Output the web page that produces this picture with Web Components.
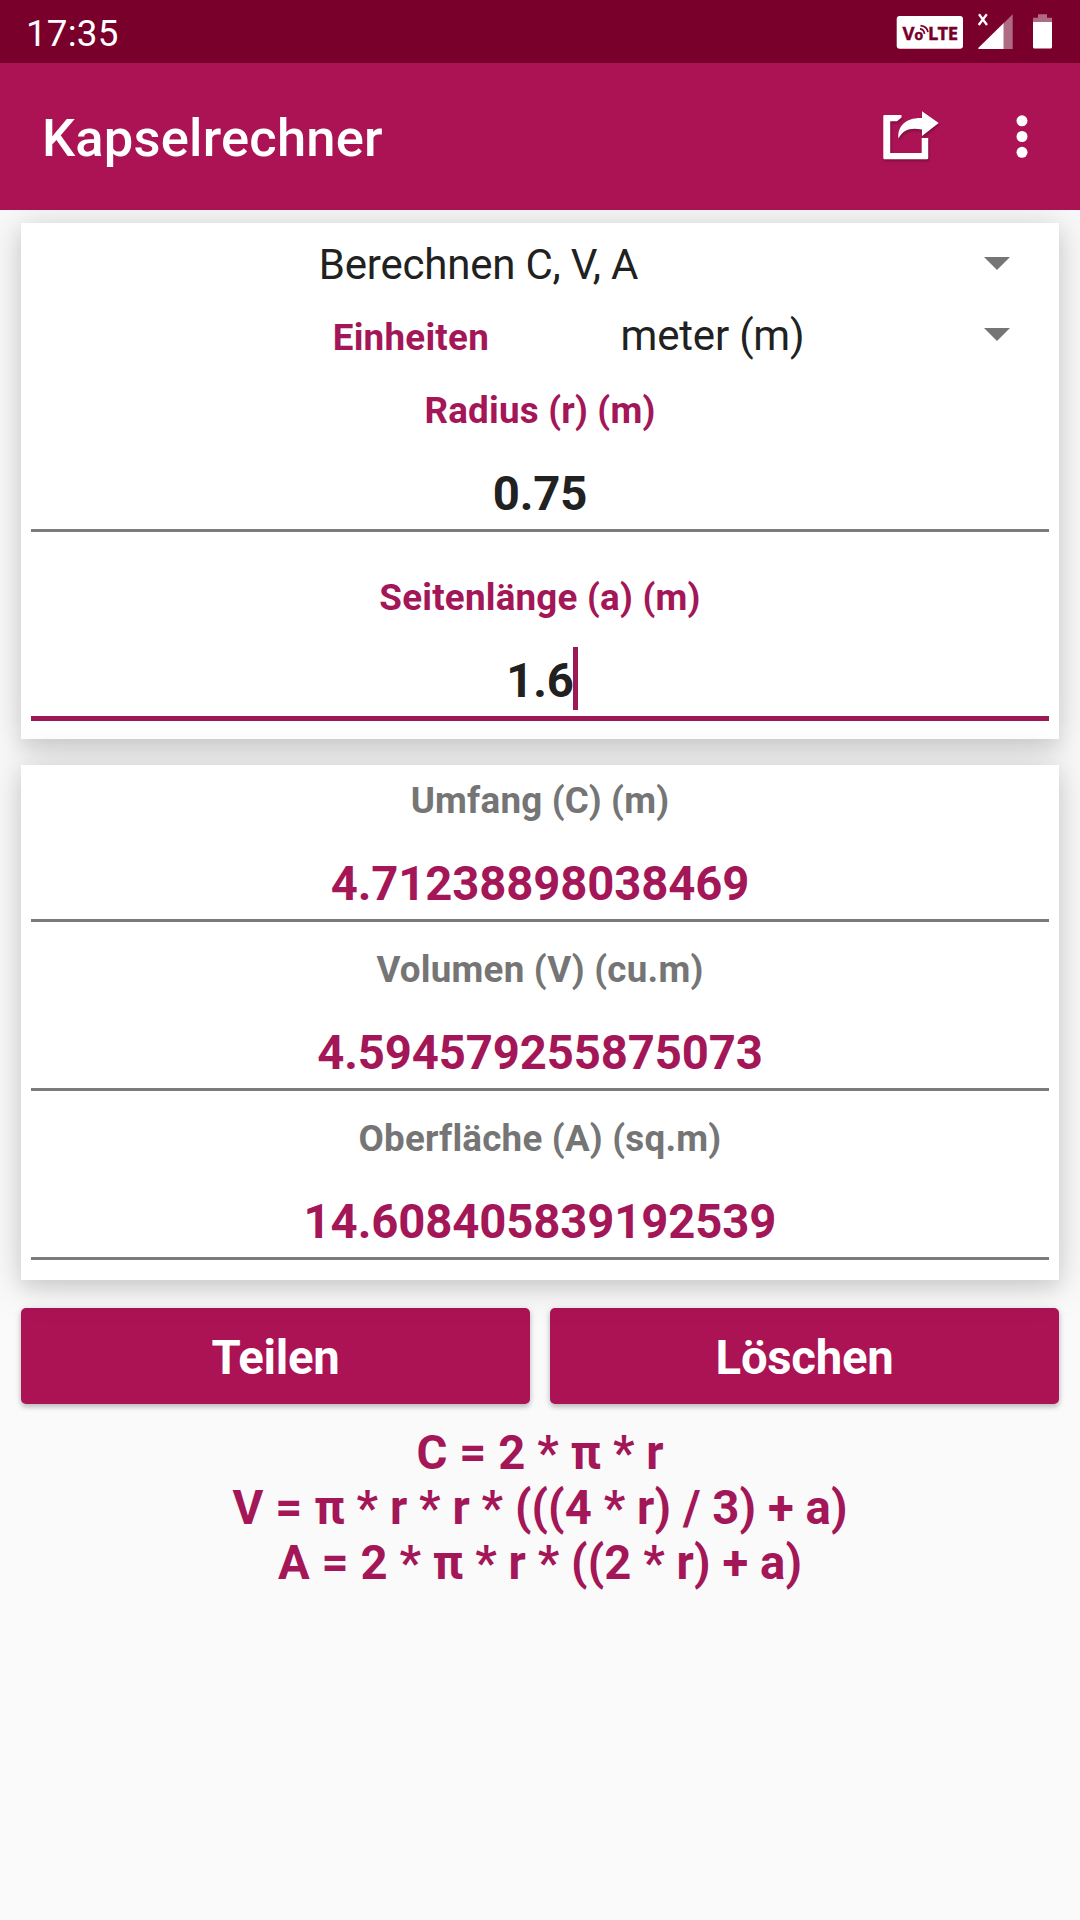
<!DOCTYPE html>
<html lang="de">
<head>
<meta charset="utf-8">
<title>Kapselrechner</title>
<style>
body { margin: 0; background: #fafafa; font-family: Roboto, "Noto Sans", sans-serif; color: #212121; }
</style>
</head>
<body>
<capsule-app></capsule-app>
<script>
function define(name, html) {
  const template = document.createElement('template');
  template.innerHTML = html;
  customElements.define(name, class extends HTMLElement {
    constructor() {
      super();
      this.attachShadow({ mode: 'open' }).appendChild(template.content.cloneNode(true));
    }
  });
}

define('status-bar', `
<style>
:host { display: flex; justify-content: space-between; height: 63px; background: #78002b; color: #fff; box-sizing: border-box; padding: 0 28px 0 26px; }
time { font-size: 36.75px; line-height: 67px; letter-spacing: .2px; }
.icons { display: flex; align-items: flex-start; padding-top: 12px; }
svg { display: block; }
.volte { margin-right: 14px; }
.signal { margin-right: 19px; }
</style>
<time>17:35</time>
<div class="icons">
  <svg class="volte" width="67" height="40" viewBox="896 12 67 40">
    <rect x="896.7" y="16" width="66.3" height="32.7" rx="3" fill="#fff"/>
    <text y="39.5" font-family="Noto Sans" font-weight="700" font-size="18.500" fill="#78002b" stroke="#78002b" stroke-width=".4"><tspan x="902.6">V</tspan><tspan x="914.3" font-size="14.500">o</tspan><tspan x="928" textLength="30">LTE</tspan></text>
    <path d="M920 28.8q4 .5 4.5 5M920.5 25.6q6.500 .5 7.500 6.500" fill="none" stroke="#78002b" stroke-width="1.7"/>
  </svg>
  <svg class="signal" width="36" height="40" viewBox="977 12 36 40">
    <path d="M979 14.200L987 25M986.800 14.200L978.700 25" stroke="#fff" stroke-width="2.300" fill="none"/>
    <path d="M1003.700 23.300L1012.700 14.300V49H1003.700z" fill="#fff" opacity=".42"/>
    <path d="M1003.700 23V49H979Q977.500 49 978.500 47.800z" fill="#fff"/>
  </svg>
  <svg width="20" height="40" viewBox="1032 12 20 40">
    <path d="M1038 14.300h9v3.400h5V22h-19v-4.300h5z" fill="#fff" opacity=".42"/>
    <path d="M1033 22h19v25q0 1.500-1.500 1.500h-16q-1.500 0-1.500-1.500z" fill="#fff"/>
  </svg>
</div>`);

define('app-bar', `
<style>
:host { display: flex; align-items: center; height: 147px; background: #ab1355; color: #fff; box-sizing: border-box; padding: 0 51px 0 42px; }
h1 { margin: 0; flex: 1; font-size: 52.5px; font-weight: 500; line-height: 147px; padding-top: 4px; box-sizing: border-box; letter-spacing: .2px; }
svg { display: block; }
.share { margin-right: 73px; filter: drop-shadow(1px 2px 1px rgba(0,0,0,.25)); }
</style>
<h1><slot></slot></h1>
<svg class="share" width="60" height="54" viewBox="882 110 60 54">
  <path d="M901.500 115H884.500Q883.300 115 883.300 116.200V158Q883.300 159.200 884.500 159.200H927Q928.200 159.200 928.200 158V138H921.700V153H890.200V121.300H897L901.500 117.500z" fill="#fff"/>
  <path d="M922 111.300L938.700 123L922 136V129.500C910 127.500 903.500 129.500 898.500 138.500C897 126 906 117.500 922 118z" fill="#fff"/>
</svg>
<svg width="14" height="54" viewBox="1015.300 110 14 54">
  <g fill="#fff"><circle cx="1022.300" cy="120.800" r="5.500"/><circle cx="1022.300" cy="136.500" r="5.500"/><circle cx="1022.300" cy="152.300" r="5.500"/></g>
</svg>`);

define('panel-card', `
<style>
:host { display: flex; flex-direction: column; background: #fff; box-sizing: border-box; position: relative; z-index: 1;
  box-shadow: 0 8px 18px rgba(0,0,0,.11), 0 2px 40px 4px rgba(0,0,0,.12); }
</style>
<slot></slot>`);

define('drop-down', `
<style>
:host { display: flex; align-items: center; height: 71px; font-size: 42px; line-height: 71px; letter-spacing: -.2px; box-sizing: border-box; padding-right: 49px; }
.value { flex: 1; text-align: center; padding-right: 48px; white-space: nowrap; }
svg { display: block; margin-top: -2px; }
</style>
<span class="value"><slot></slot></span>
<svg width="26" height="13" viewBox="0 0 26 13"><path d="M0 0H26L13 13z" fill="#757575"/></svg>`);

define('unit-row', `
<style>
:host { display: flex; height: 71px; }
.label { width: 468px; text-align: right; font-weight: 700; font-size: 36.75px; line-height: 75px; letter-spacing: .25px; color: #a31657; }
::slotted(drop-down) { flex: 1; }
</style>
<span class="label">Einheiten</span><slot></slot>`);

define('value-field', `
<style>
:host { display: block; height: 146px; margin: 0 10px; text-align: center; font-weight: 700; --label: #757575; --value: #a31657; }
:host([input]) { --label: #a31657; --value: #212121; }
.label { font-size: 36.75px; line-height: 44px; height: 43px; padding-top: 1px; letter-spacing: .22px; color: var(--label); }
.value { font-size: 47.25px; line-height: 56px; margin-top: 34px; letter-spacing: -.1px; color: var(--value); }
.text { position: relative; display: inline-block; }
.line { margin-top: 7px; height: 3px; background: #7b7b7b; }
:host([focused]) .line { height: 5px; background: #9c1955; }
:host([focused]) .text::after { content: ""; position: absolute; left: calc(100% - 1px); top: -6px; width: 5px; height: 63px; background: #9c1955; }
</style>
<div class="label"><slot name="label"></slot></div>
<div class="value"><span class="text"><slot></slot></span></div>
<div class="line"></div>`);

define('action-button', `
<style>
:host { display: block; flex: 1; height: 96px; border-radius: 5px; background: #ab1355; color: #fff; text-align: center; font-size: 47.25px; font-weight: 700; line-height: 101px; letter-spacing: -.25px;
  box-shadow: 0 3px 5px rgba(0,0,0,.2), 0 1px 8px rgba(0,0,0,.1); }
</style>
<slot></slot>`);

define('formula-list', `
<style>
:host { display: block; text-align: center; color: #a31657; font-size: 47.25px; font-weight: 700; line-height: 55px; letter-spacing: .07px; }
</style>
<slot></slot>`);

define('capsule-app', `
<style>
:host { display: flex; flex-direction: column; width: 1080px; height: 1920px; overflow: hidden; background: #fafafa; }
app-bar { position: relative; z-index: 2; }
main { display: flex; flex-direction: column; padding: 13px 21px 0; }
.inputs { height: 516px; padding-top: 6px; }
.inputs value-field:nth-of-type(1) { margin-top: 17px; }
.inputs value-field:nth-of-type(2) { margin-top: 41px; }
.results { height: 515px; margin-top: 26px; padding-top: 13px; gap: 23px; }
.actions { display: flex; gap: 20px; margin-top: 28px; }
formula-list { margin-top: 22px; }
</style>
<status-bar></status-bar>
<app-bar>Kapselrechner</app-bar>
<main>
  <panel-card class="inputs">
    <drop-down>Berechnen C, V, A</drop-down>
    <unit-row><drop-down>meter (m)</drop-down></unit-row>
    <value-field input><span slot="label">Radius (r) (m)</span>0.75</value-field>
    <value-field input focused><span slot="label">Seitenlänge (a) (m)</span>1.6</value-field>
  </panel-card>
  <panel-card class="results">
    <value-field><span slot="label">Umfang (C) (m)</span>4.71238898038469</value-field>
    <value-field><span slot="label">Volumen (V) (cu.m)</span>4.594579255875073</value-field>
    <value-field><span slot="label">Oberfläche (A) (sq.m)</span>14.608405839192539</value-field>
  </panel-card>
  <div class="actions">
    <action-button>Teilen</action-button>
    <action-button>Löschen</action-button>
  </div>
  <formula-list>
    <div>C = 2 * π * r</div>
    <div>V = π * r * r * (((4 * r) / 3) + a)</div>
    <div>A = 2 * π * r * ((2 * r) + a)</div>
  </formula-list>
</main>`);
</script>
</body>
</html>
